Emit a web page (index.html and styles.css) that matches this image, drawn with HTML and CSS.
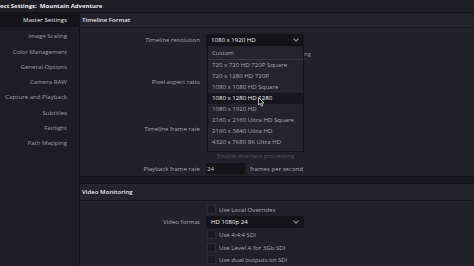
FILE: index.html
```html
<!DOCTYPE html>
<html lang="en">
<head>
  <meta charset="UTF-8">
  <title>Project Settings</title>
  <link rel="stylesheet" href="styles.css">
</head>
<body>
  <div class="titlebar">ect Settings:&nbsp; Mountain Adventure</div>

  <div class="main">
    <div class="sidebar">
      <div class="nav active">Master Settings</div>
      <div class="nav">Image Scaling</div>
      <div class="nav">Color Management</div>
      <div class="nav">General Options</div>
      <div class="nav">Camera RAW</div>
      <div class="nav">Capture and Playback</div>
      <div class="nav">Subtitles</div>
      <div class="nav">Fairlight</div>
      <div class="nav">Path Mapping</div>
    </div>

    <div class="content">
      <div class="section-head">Timeline Format</div>
      <div class="panel format">
        <div class="row r-res">
          <div class="label">Timeline resolution</div>
          <div class="field">
            <div class="select">1080 x 1920 HD <span class="chev"></span></div>
            <div class="menu">
              <div class="item">Custom</div>
              <div class="sep"></div>
              <div class="item">720 x 720 HD 720P Square</div>
              <div class="item">720 x 1280 HD 720P</div>
              <div class="item">1080 x 1080 HD Square</div>
              <div class="item hover">1080 x 1280 HD 1280</div>
              <div class="item">1080 x 1920 HD</div>
              <div class="item">2160 x 2160 Ultra HD Square</div>
              <div class="item">2160 x 3840 Ultra HD</div>
              <div class="item">4320 x 7680 8K Ultra HD</div>
              <svg class="pointer" width="7" height="10" viewBox="0 0 7 10">
                <path d="M0.5 0.5 L0.5 8 L2.3 6.4 L3.6 9.3 L4.7 8.8 L3.5 6 L6 6 Z" fill="#111" stroke="#ddd" stroke-width="0.8"/>
              </svg>
            </div>
          </div>
        </div>
        <div class="row r-vert">
          <div class="label"></div>
          <div class="check-text">Use vertical resolution for scaling</div>
        </div>
        <div class="row r-par">
          <div class="label">Pixel aspect ratio</div>
        </div>
        <div class="row r-tfr">
          <div class="label">Timeline frame rate</div>
        </div>
        <div class="row r-inter">
          <div class="label"></div>
          <div class="dim">Enable interlace processing</div>
        </div>
        <div class="row r-pfr">
          <div class="label">Playback frame rate</div>
          <div class="input">24</div>
          <div class="unit">frames per second</div>
        </div>
      </div>

      <div class="section-head video-head">Video Monitoring</div>
      <div class="panel video">
        <div class="row">
          <div class="label"></div>
          <span class="box"></span><span class="opt">Use Local Overrides</span>
        </div>
        <div class="row">
          <div class="label">Video format</div>
          <div class="select">HD 1080p 24 <span class="chev"></span></div>
        </div>
        <div class="row">
          <div class="label"></div>
          <span class="box"></span><span class="opt">Use 4:4:4 SDI</span>
        </div>
        <div class="row">
          <div class="label"></div>
          <span class="box"></span><span class="opt">Use Level A for 3Gb SDI</span>
        </div>
        <div class="row">
          <div class="label"></div>
          <span class="box"></span><span class="opt">Use dual outputs on SDI</span>
        </div>
      </div>
    </div>
  </div>
</body>
</html>
```

FILE: styles.css
```css
body {
  margin: 0;
  width: 474px;
  height: 266px;
  overflow: hidden;
  background: #1d1c23;
  font-family: "Open Sans", "Noto Sans", sans-serif;
  font-size: 6.1px;
  color: #a9a8b0;
}

.titlebar {
  height: 12px;
  line-height: 12px;
  background: #1f1e24;
  color: #ecebf0;
  font-weight: bold;
  font-size: 6px;
  border-bottom: 1px solid #121115;
  white-space: nowrap;
}

.main {
  display: grid;
  grid-template-columns: 79px 1fr;
  height: 253px;
}

.sidebar {
  background: #1e1d25;
}

.nav {
  height: 15.3px;
  line-height: 15.3px;
  text-align: right;
  padding-right: 12px;
  color: #9e9da6;
  white-space: nowrap;
}

.nav.active {
  height: 14px;
  line-height: 14px;
  background: #141318;
  color: #e6e5ea;
  margin-bottom: 1.3px;
}

.content {
  background: #1a1920;
  border-left: 1px solid #141318;
}

.section-head {
  height: 14px;
  line-height: 14px;
  padding-left: 2px;
  background: #24232c;
  color: #e4e3e9;
  font-weight: 600;
  border-bottom: 1px solid #141318;
}

.panel {
  background: #22212a;
  border-bottom: 1px solid #141318;
}

.format {
  height: 149px;
  padding-top: 5px;
  box-sizing: border-box;
}

.row {
  display: flex;
  align-items: center;
  white-space: nowrap;
}

.label {
  width: 126px;
  flex: none;
  text-align: right;
  padding-right: 6px;
  box-sizing: border-box;
  color: #a4a3ab;
}

.r-res { height: 13px; }
.r-vert { height: 15px; }
.r-par { height: 40px; }
.r-tfr { height: 48px; align-items: flex-start; }
.r-inter { height: 12px; }
.r-pfr { height: 14px; }

.r-tfr .label {
  line-height: 14px;
  padding-top: 21px;
}

.field {
  position: relative;
}

.select {
  position: relative;
  width: 98px;
  height: 12px;
  line-height: 12px;
  box-sizing: border-box;
  padding-left: 5px;
  background: #151419;
  color: #eeedf2;
  border-radius: 1px;
}

.chev {
  position: absolute;
  right: 6px;
  top: 3px;
  width: 3px;
  height: 3px;
  border-right: 1px solid #9a99a2;
  border-bottom: 1px solid #9a99a2;
  transform: rotate(45deg);
}

.menu {
  position: absolute;
  left: 1px;
  top: 11px;
  width: 97px;
  padding: 2px 0 3px;
  background: #25242c;
  border: 1px solid #111014;
  box-sizing: border-box;
  z-index: 2;
}

.item {
  height: 10.9px;
  line-height: 10.9px;
  padding-left: 4px;
  color: #a9a8b0;
  white-space: nowrap;
}

.item.hover {
  background: #17161c;
  color: #f2f1f6;
}

.sep {
  height: 1px;
  margin: 1px 0 0;
  background: #38373f;
}

.pointer {
  position: absolute;
  left: 50px;
  top: 51px;
}

.check-text {
  margin-left: 11px;
  color: #8f8e96;
}

.dim {
  padding-left: 11px;
  color: #55545c;
}

.input {
  width: 38px;
  height: 11px;
  line-height: 11px;
  padding-left: 1px;
  background: #151419;
  color: #c9c8ce;
}

.unit {
  padding-left: 5px;
  color: #a9a8b0;
}

.video-head {
  margin-top: 6px;
  height: 16px;
  line-height: 16px;
  border-top: 1px solid #141318;
}

.video {
  height: 70px;
  padding-top: 2px;
  box-sizing: border-box;
  border-bottom: none;
}

.video .row {
  height: 12.6px;
}

.box {
  width: 7px;
  height: 7px;
  margin-left: 1px;
  background: #1a1920;
  border: 1px solid #2b2a32;
  flex: none;
}

.opt {
  padding-left: 3px;
  color: #a9a8b0;
}
```
